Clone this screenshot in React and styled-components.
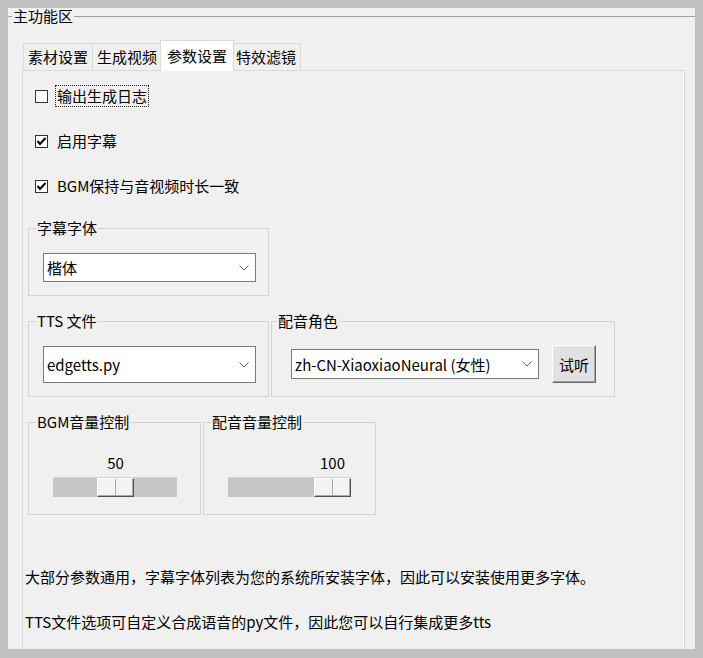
import React from 'react';
import styled, { createGlobalStyle } from 'styled-components';

const GlobalStyle = createGlobalStyle`
  * { box-sizing: border-box; }
  html, body {
    margin: 0;
    padding: 0;
    background: #c0c0c0;
  }
  body {
    font-family: "Noto Sans CJK SC", "Noto Sans", sans-serif;
    font-size: 15px;
    color: #000;
  }
`;

const Window = styled.div`
  margin: 8px;
  width: 687px;
  height: 641px;
  display: flow-root;
  background: #f0f0f0;
`;

const MainGroup = styled.fieldset`
  margin: 0;
  padding: 0;
  min-width: 0;
  border: none;
  border-top: 1px solid #a0a0a0;
`;

const MainLegend = styled.legend`
  margin-left: 4px;
  padding: 0 1px;
  line-height: 16px;
`;

const MainBody = styled.div`
  padding: 16px 10px 0 14px;
`;

const TabBar = styled.div`
  display: flex;
  align-items: flex-end;
  height: 30px;
  padding-left: 1px;
`;

const Tab = styled.div`
  position: relative;
  height: ${p => (p.$active ? 31 : 27)}px;
  margin: ${p => (p.$active ? '0 -2px -1px -2px' : '0 0 0 -1px')};
  padding: ${p => (p.$active ? '0 6px' : '0 4px')};
  z-index: ${p => (p.$active ? 1 : 0)};
  display: flex;
  align-items: center;
  background: ${p => (p.$active ? '#ffffff' : '#f0f0f0')};
  border: 1px solid #d9d9d9;
  border-bottom: none;
  line-height: 18px;
  white-space: nowrap;
  &:first-child { margin-left: 0; }
`;

const Panel = styled.div`
  height: 579px;
  display: flex;
  flex-direction: column;
  align-items: flex-start;
  background: #f0f0f0;
  border: 1px solid #d9d9d9;
  border-bottom: none;
  box-shadow: inset -1px 0 #ffffff;
`;

const CheckRow = styled.div`
  display: flex;
  align-items: center;
  gap: 7px;
  height: 22px;
  margin: ${p => p.$top}px 0 0 12px;
`;

const Box = styled.span`
  width: 13px;
  height: 13px;
  display: flex;
  align-items: center;
  justify-content: center;
  background: #ffffff;
  border: 1px solid #333333;
`;

const CheckLabel = styled.span`
  height: 22px;
  padding: 0 1px;
  line-height: 20px;
  border: 1px dotted ${p => (p.$focus ? '#222' : 'transparent')};
  white-space: nowrap;
`;

const GroupRow = styled.div`
  display: flex;
  gap: 2px;
  margin: ${p => p.$top}px 0 0 5px;
`;

const GroupBox = styled.fieldset`
  width: ${p => p.$w}px;
  margin: 0;
  padding: 0;
  min-width: 0;
  border: 1px solid #d3d3d3;
`;

const Legend = styled.legend`
  margin-left: ${p => p.$shift ?? 7}px;
  padding: 0 1px;
  line-height: 18px;
  white-space: nowrap;
`;

const GroupInner = styled.div`
  display: flex;
  align-items: center;
  gap: 13px;
  padding: ${p => p.$pad};
`;

const Combo = styled.div`
  width: ${p => p.$w}px;
  height: ${p => p.$h}px;
  display: flex;
  align-items: center;
  justify-content: space-between;
  padding: 0 6px 0 3px;
  background: #ffffff;
  border: 1px solid #7a7a7a;
  white-space: nowrap;
`;

const Button = styled.button`
  width: 44px;
  height: 38px;
  padding: 0;
  font: inherit;
  font-size: 15px;
  color: #000;
  background: #e1e1e1;
  border: 1px solid;
  border-color: #ffffff #6a6a6a #6a6a6a #ffffff;
  box-shadow: inset -1px -1px #a0a0a0, inset 1px 1px #e8e8e8;
`;

const SliderWrap = styled.div`
  position: relative;
  width: ${p => p.$w}px;
  padding-top: 24px;
`;

const SliderValue = styled.span`
  position: absolute;
  top: 0;
  width: 37px;
  line-height: 20px;
  text-align: center;
`;

const Track = styled.div`
  position: relative;
  height: 20px;
  background: #c6c6c6;
  border-top: 1px solid #d4d4d4;
`;

const Thumb = styled.div`
  position: absolute;
  top: 0;
  width: 37px;
  height: 19px;
  display: flex;
  background: #f3f3f3;
  border-top: 1px solid #ffffff;
  border-left: 1px solid #ffffff;
  border-right: 1px solid #505050;
  border-bottom: 1px solid #505050;
  box-shadow: inset -1px -1px #a8a8a8;
`;

const ThumbHalf = styled.span`
  flex: 1;
  & + & { border-left: 1px solid #a8a8a8; }
`;

const Note = styled.p`
  margin: ${p => p.$top}px 0 0 2px;
  line-height: 20px;
  white-space: nowrap;
`;

const Chevron = () => (
  <svg width="10" height="6" viewBox="0 0 10 6">
    <polyline points="0.5,0.5 5,5 9.5,0.5" fill="none" stroke="#606060" strokeWidth="1" />
  </svg>
);

const Check = () => (
  <svg width="11" height="11" viewBox="0 0 11 11">
    <polyline points="1.5,5 4,8 9.5,2" fill="none" stroke="#000" strokeWidth="2" />
  </svg>
);

const Checkbox = ({ checked, focus, top, children }) => (
  <CheckRow $top={top}>
    <Box>{checked && <Check />}</Box>
    <CheckLabel $focus={focus}>{children}</CheckLabel>
  </CheckRow>
);

const Slider = ({ value, width }) => {
  const left = Math.round(((width - 37) * value) / 100);
  return (
    <SliderWrap $w={width}>
      <SliderValue style={{ left }}>{value}</SliderValue>
      <Track>
        <Thumb style={{ left }}>
          <ThumbHalf />
          <ThumbHalf />
        </Thumb>
      </Track>
    </SliderWrap>
  );
};

const tabs = ['素材设置', '生成视频', '参数设置', '特效滤镜'];

export default function App() {
  return (
    <>
      <GlobalStyle />
      <Window>
        <MainGroup>
          <MainLegend>主功能区</MainLegend>
          <MainBody>
            <TabBar>
              {tabs.map((t, i) => (
                <Tab key={t} $active={i === 2}>{t}</Tab>
              ))}
            </TabBar>
            <Panel>
              <Checkbox top={14} focus>输出生成日志</Checkbox>
              <Checkbox top={23} checked>启用字幕</Checkbox>
              <Checkbox top={23} checked>BGM保持与音视频时长一致</Checkbox>

              <GroupRow $top={22}>
                <GroupBox $w={241}>
                  <Legend>字幕字体</Legend>
                  <GroupInner $pad="16px 0 13px 14px">
                    <Combo $w={213} $h={29}>楷体<Chevron /></Combo>
                  </GroupInner>
                </GroupBox>
              </GroupRow>

              <GroupRow $top={16}>
                <GroupBox $w={241}>
                  <Legend>TTS 文件</Legend>
                  <GroupInner $pad="16px 0 13px 14px">
                    <Combo $w={213} $h={37}>edgetts.py<Chevron /></Combo>
                  </GroupInner>
                </GroupBox>
                <GroupBox $w={344}>
                  <Legend $shift={5}>配音角色</Legend>
                  <GroupInner $pad="15px 0 13px 19px">
                    <Combo $w={248} $h={30}>zh-CN-XiaoxiaoNeural (女性)<Chevron /></Combo>
                    <Button>试听</Button>
                  </GroupInner>
                </GroupBox>
              </GroupRow>

              <GroupRow $top={16}>
                <GroupBox $w={173}>
                  <Legend>BGM音量控制</Legend>
                  <GroupInner $pad="22px 0 17px 24px">
                    <Slider value={50} width={124} />
                  </GroupInner>
                </GroupBox>
                <GroupBox $w={173}>
                  <Legend>配音音量控制</Legend>
                  <GroupInner $pad="22px 0 17px 24px">
                    <Slider value={100} width={123} />
                  </GroupInner>
                </GroupBox>
              </GroupRow>

              <Note $top={52}>大部分参数通用，字幕字体列表为您的系统所安装字体，因此可以安装使用更多字体。</Note>
              <Note $top={25}>TTS文件选项可自定义合成语音的py文件，因此您可以自行集成更多tts</Note>
            </Panel>
          </MainBody>
        </MainGroup>
      </Window>
    </>
  );
}
